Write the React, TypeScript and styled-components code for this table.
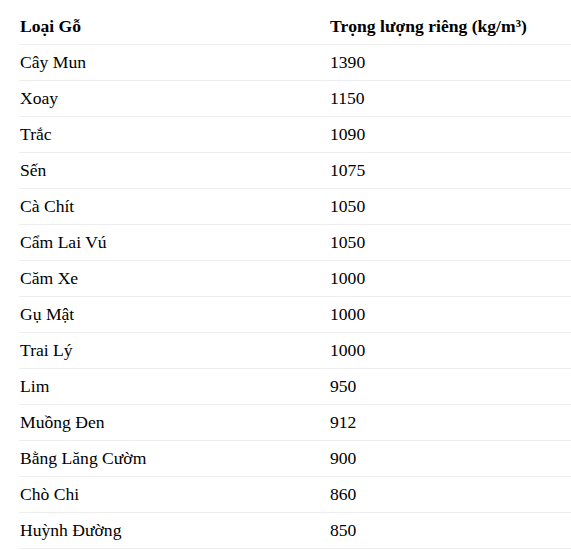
import styled, { createGlobalStyle } from 'styled-components';

const GlobalStyle = createGlobalStyle`
  body {
    margin: 0;
    background: #fff;
    font-family: "Liberation Serif", "Times New Roman", serif;
    color: #000;
  }
`;

const rows: [string, number][] = [
  ['Cây Mun', 1390],
  ['Xoay', 1150],
  ['Trắc', 1090],
  ['Sến', 1075],
  ['Cà Chít', 1050],
  ['Cẩm Lai Vú', 1050],
  ['Căm Xe', 1000],
  ['Gụ Mật', 1000],
  ['Trai Lý', 1000],
  ['Lim', 950],
  ['Muồng Đen', 912],
  ['Bằng Lăng Cườm', 900],
  ['Chò Chi', 860],
  ['Huỳnh Đường', 850],
];

const App = () => {
  return (
    <Page>
      <GlobalStyle />
      <Table>
        <thead>
          <tr>
            <HeadCell>Loại Gỗ</HeadCell>
            <HeadCell>Trọng lượng riêng (kg/m³)</HeadCell>
          </tr>
        </thead>
        <tbody>
          {rows.map(([name, weight]) => (
            <tr key={name}>
              <Cell>{name}</Cell>
              <Cell>{weight}</Cell>
            </tr>
          ))}
        </tbody>
      </Table>
    </Page>
  );
};

export default App;

const Page = styled.div`
  padding: 9px 0 0 19px;
`;

const Table = styled.table`
  width: 552px;
  border-collapse: collapse;
  font-size: 17.6px;

  th:first-child,
  td:first-child {
    width: 309px;
  }
`;

const HeadCell = styled.th`
  text-align: left;
  font-weight: bold;
  padding: 0 0 2px 1px;
  height: 33px;
  line-height: 20px;
  border-bottom: 1px solid #eee;
  vertical-align: middle;
`;

const Cell = styled.td`
  padding: 0 0 2px 1px;
  height: 33px;
  line-height: 20px;
  border-bottom: 1px solid #eee;
  vertical-align: middle;
`;
